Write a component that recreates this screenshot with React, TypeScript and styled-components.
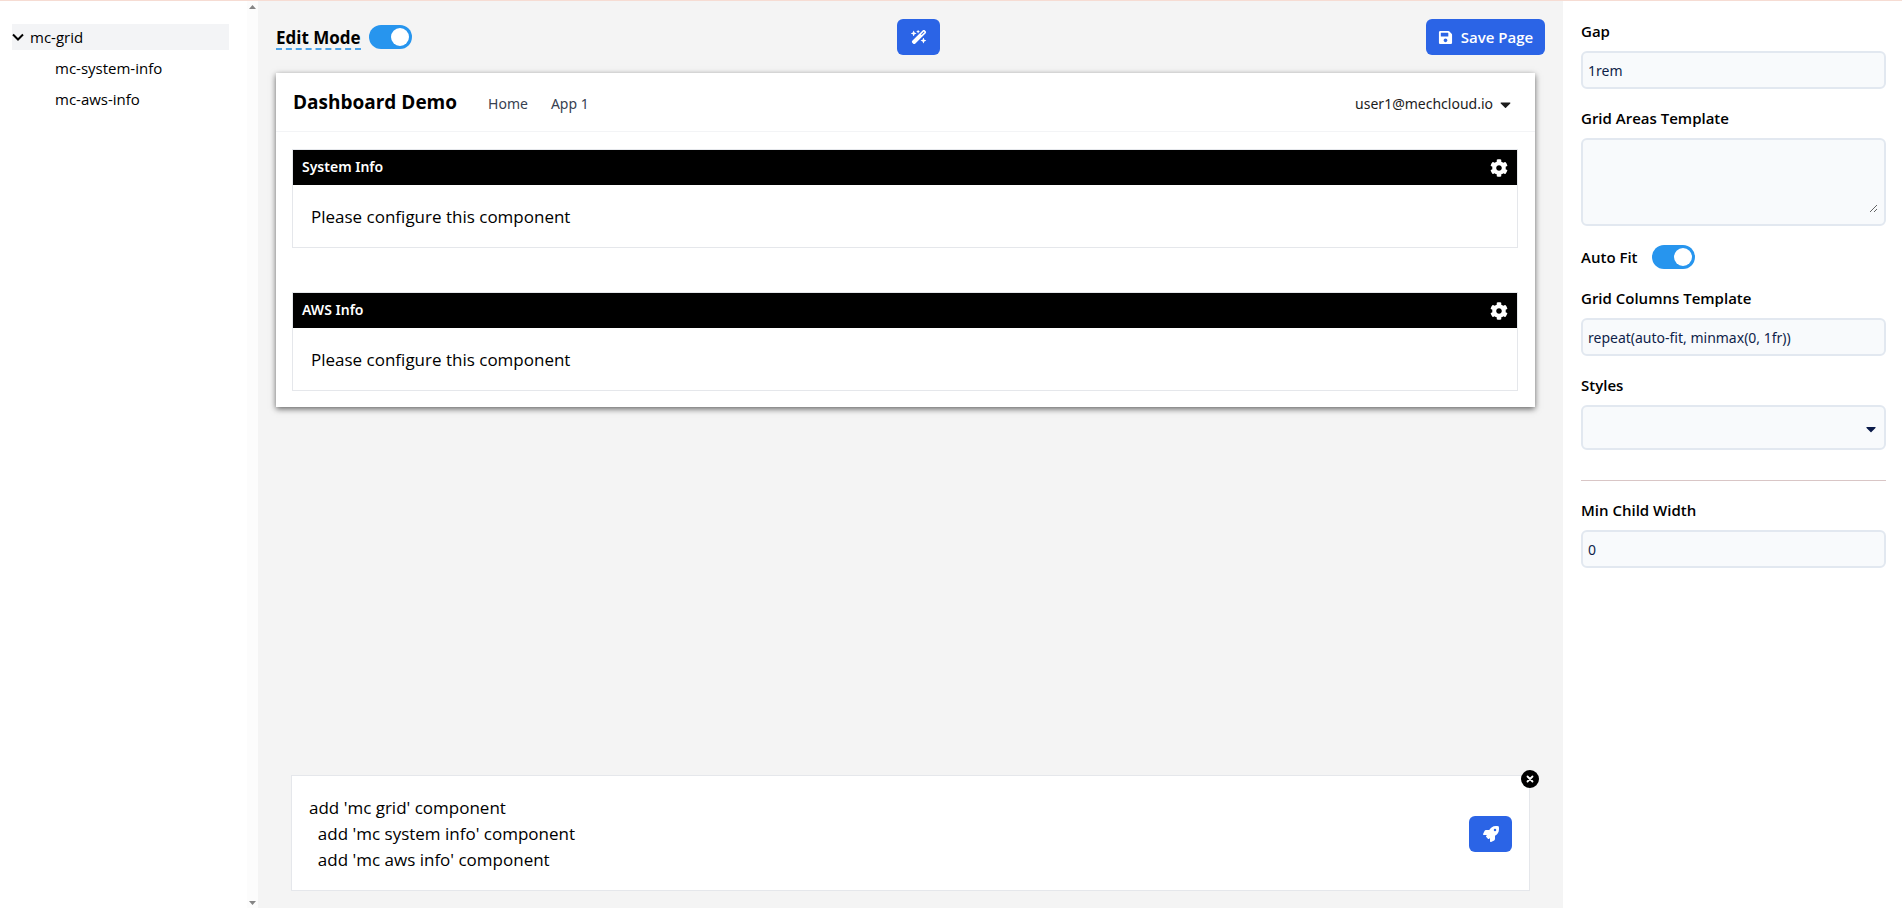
import React, { useState } from "react";
import styled, { createGlobalStyle, css } from "styled-components";
import { FaCaretDown, FaCog, FaRocket, FaSave } from "react-icons/fa";
import { FaWandMagicSparkles } from "react-icons/fa6";

const textFont = `"Open Sans", "Noto Sans", sans-serif`;
const uiFont = `"Noto Sans", "Open Sans", sans-serif`;

const GlobalStyle = createGlobalStyle`
  *, *::before, *::after { box-sizing: border-box; }
  body {
    margin: 0;
    background: #fff;
    color: #000;
    font-family: ${textFont};
    font-size: 17px;
    line-height: 26px;
  }
  button, input, textarea, select { font: inherit; color: inherit; margin: 0; }
  button { cursor: pointer; border: 0; padding: 0; background: none; }
`;

const Shell = styled.div`
  display: grid;
  grid-template-columns: 258px minmax(0, 1fr) 339px;
  min-height: 100vh;
  border-top: 1px solid #f6dcd3;
`;

/* Component tree */

const Sidebar = styled.aside`
  display: flex;
`;

const Tree = styled.ul`
  flex: 1;
  display: flex;
  flex-direction: column;
  gap: 5px;
  margin: 0;
  padding: 23px 18px 0 12px;
  list-style: none;
`;

const TreeRow = styled.button<{ $selected?: boolean; $child?: boolean }>`
  display: flex;
  align-items: center;
  gap: 6px;
  width: 100%;
  height: 26px;
  padding-left: ${(p) => (p.$child ? 43 : 0)}px;
  background: ${(p) => (p.$selected ? "#f3f4f6" : "transparent")};
  font-size: 15px;
  line-height: 22px;
  text-align: left;
`;

const ScrollTrack = styled.div`
  display: flex;
  flex-direction: column;
  justify-content: space-between;
  align-items: center;
  width: 11px;
  padding: 4px 0 3px;
  background: #fcfcfc;
`;

/* Editor */

const Editor = styled.main`
  display: flex;
  flex-direction: column;
  padding: 18px 18px 17px;
  background: #f4f4f4;
`;

const Toolbar = styled.header`
  display: flex;
  justify-content: space-between;
  align-items: center;
  height: 36px;
`;

const ModeLabel = styled.label`
  display: flex;
  align-items: center;
  gap: 8px;
  font-weight: 700;
`;

const ModeText = styled.span`
  padding-top: 3px;
  line-height: 21px;
  border-bottom: 2px dashed #4ba3ea;
`;

const Toggle = styled.input.attrs({ type: "checkbox" })`
  appearance: none;
  display: flex;
  align-items: center;
  width: 43px;
  height: 24px;
  padding: 0 3px;
  border-radius: 12px;
  background: #ccc;
  cursor: pointer;

  &::before {
    content: "";
    width: 18px;
    height: 18px;
    border-radius: 50%;
    background: #fff;
  }
  &:checked {
    justify-content: flex-end;
    background: #2795ee;
  }
`;

const PrimaryButton = styled.button<{ $wide?: boolean }>`
  display: flex;
  align-items: center;
  justify-content: center;
  gap: 8px;
  min-width: ${(p) => (p.$wide ? 119 : 43)}px;
  height: 36px;
  border-radius: 6px;
  background: #2b64e6;
  color: #fff;
  font-family: ${textFont};
  font-size: 15px;
  font-weight: 600;
`;

const Preview = styled.section`
  margin: 18px 10px 0 0;
  background: #fff;
  box-shadow: 0 2px 6px rgba(0, 0, 0, 0.6);
`;

const NavBar = styled.nav`
  display: flex;
  align-items: center;
  height: 59px;
  padding: 0 21px 0 17px;
  border-bottom: 1px solid #f3f4f6;
`;

const Brand = styled.h1`
  margin: 0 31px 0 0;
  font-size: 19px;
  line-height: 26px;
  font-weight: 700;
`;

const NavLink = styled.a`
  margin-right: 23px;
  padding-top: 4px;
  color: #374151;
  font-family: ${uiFont};
  font-size: 14px;
  line-height: 22px;
  text-decoration: none;
`;

const UserMenu = styled.button`
  display: flex;
  align-items: center;
  gap: 4px;
  margin-left: auto;
  padding-top: 4px;
  font-family: ${uiFont};
  font-size: 14px;
  line-height: 22px;
  color: #1c1c1c;
`;

const Widgets = styled.div`
  display: grid;
  gap: 44px;
  padding: 17px 17px 16px 16px;
`;

const Widget = styled.article`
  border: 1px solid #e5e7eb;
`;

const WidgetBar = styled.header`
  display: flex;
  align-items: center;
  justify-content: space-between;
  height: 35px;
  padding: 0 9px;
  background: #000;
  color: #fff;
`;

const WidgetTitle = styled.h2`
  margin: 0;
  padding-bottom: 2px;
  font-family: ${uiFont};
  font-size: 14px;
  line-height: 22px;
  font-weight: 600;
`;

const IconButton = styled.button`
  display: flex;
  color: inherit;
`;

const WidgetBody = styled.p`
  margin: 0;
  padding: 19px 18px 17px;
`;

const Prompt = styled.form`
  position: relative;
  display: flex;
  align-items: center;
  gap: 18px;
  margin: auto 15px 0 15px;
  padding: 19px 17px 17px;
  border: 1px solid #e5e7eb;
  background: #fff;
`;

const PromptText = styled.textarea`
  flex: 1;
  height: 78px;
  padding: 0;
  border: 0;
  outline: 0;
  resize: none;
  background: none;
  overflow: hidden;
`;

const CloseButton = styled.button`
  position: absolute;
  top: -6px;
  right: -10px;
  display: flex;
`;

/* Properties */

const Properties = styled.aside`
  display: flex;
  flex-direction: column;
  gap: 19px;
  padding: 20px 16px 18px 18px;
`;

const Field = styled.div`
  display: flex;
  flex-direction: column;
  gap: 9px;
`;

const SwitchField = styled.div`
  display: flex;
  align-items: center;
  gap: 14px;
`;

const FieldLabel = styled.label`
  font-size: 15px;
  line-height: 21px;
  font-weight: 600;
`;

const control = css`
  width: 100%;
  border: 2px solid #e2e8f0;
  border-radius: 6px;
  background: #f8fafc;
  color: #0f1f4a;
  font-family: ${uiFont};
  font-size: 14px;
  line-height: 22px;
  outline: 0;
`;

const TextInput = styled.input`
  ${control}
  height: 38px;
  padding: 0 5px;
`;

const AreaFrame = styled.div`
  ${control}
  display: flex;
  padding: 9px 6px 11px 5px;
`;

const Area = styled.textarea`
  width: 100%;
  height: 64px;
  padding: 0;
  border: 0;
  outline: 0;
  background: none;
  resize: vertical;
`;

const SelectFrame = styled.div`
  position: relative;
  display: flex;
  color: #0b1b4a;
`;

const Select = styled.select`
  ${control}
  appearance: none;
  height: 45px;
  padding: 0 5px;
`;

const SelectArrow = styled(FaCaretDown)`
  position: absolute;
  right: 7px;
  top: 16px;
  pointer-events: none;
`;

const Divider = styled.hr`
  width: 100%;
  margin: 11px 0 0;
  border: 0;
  border-top: 1px solid #d9c6c6;
`;

const ScrollArrow = ({ down }: { down?: boolean }) => (
  <svg width="7" height="4" viewBox="0 0 7 4" aria-hidden="true">
    <path d={down ? "M0 0h7L3.5 4z" : "M0 4h7L3.5 0z"} fill="#858585" />
  </svg>
);

const Chevron = () => (
  <svg width="12" height="8" viewBox="0 0 12 8" fill="none" aria-hidden="true">
    <path d="M1 1.5 6 6.5 11 1.5" stroke="#000" strokeWidth="2" />
  </svg>
);

const CloseIcon = () => (
  <svg width="18" height="18" viewBox="0 0 18 18" aria-hidden="true">
    <circle cx="9" cy="9" r="9" />
    <path d="M6.5 6.5l5 5m0-5l-5 5" stroke="#fff" strokeWidth="1.8" strokeLinecap="round" />
  </svg>
);

const widgets = ["System Info", "AWS Info"];

const script = `add 'mc grid' component
  add 'mc system info' component
  add 'mc aws info' component`;

export default function App() {
  const [selected, setSelected] = useState("mc-grid");

  return (
    <>
      <GlobalStyle />
      <Shell>
        <Sidebar>
          <Tree>
            {["mc-grid", "mc-system-info", "mc-aws-info"].map((name, i) => (
              <li key={name}>
                <TreeRow
                  type="button"
                  $child={i > 0}
                  $selected={selected === name}
                  onClick={() => setSelected(name)}
                >
                  {i === 0 && <Chevron />}
                  {name}
                </TreeRow>
              </li>
            ))}
          </Tree>
          <ScrollTrack>
            <ScrollArrow />
            <ScrollArrow down />
          </ScrollTrack>
        </Sidebar>

        <Editor>
          <Toolbar>
            <ModeLabel>
              <ModeText>Edit Mode</ModeText>
              <Toggle defaultChecked />
            </ModeLabel>
            <PrimaryButton type="button" aria-label="Generate">
              <FaWandMagicSparkles size={16} />
            </PrimaryButton>
            <PrimaryButton type="button" $wide>
              <FaSave size={15} />
              Save Page
            </PrimaryButton>
          </Toolbar>

          <Preview>
            <NavBar>
              <Brand>Dashboard Demo</Brand>
              <NavLink href="#home">Home</NavLink>
              <NavLink href="#app-1">App 1</NavLink>
              <UserMenu type="button">
                user1@mechcloud.io
                <FaCaretDown size={17} />
              </UserMenu>
            </NavBar>
            <Widgets>
              {widgets.map((title) => (
                <Widget key={title}>
                  <WidgetBar>
                    <WidgetTitle>{title}</WidgetTitle>
                    <IconButton type="button" aria-label={`Configure ${title}`}>
                      <FaCog size={18} />
                    </IconButton>
                  </WidgetBar>
                  <WidgetBody>Please configure this component</WidgetBody>
                </Widget>
              ))}
            </Widgets>
          </Preview>

          <Prompt onSubmit={(e) => e.preventDefault()}>
            <PromptText aria-label="Prompt" defaultValue={script} spellCheck={false} />
            <PrimaryButton type="submit" aria-label="Run">
              <FaRocket size={16} />
            </PrimaryButton>
            <CloseButton type="button" aria-label="Close">
              <CloseIcon />
            </CloseButton>
          </Prompt>
        </Editor>

        <Properties>
          <Field>
            <FieldLabel htmlFor="gap">Gap</FieldLabel>
            <TextInput id="gap" defaultValue="1rem" />
          </Field>
          <Field>
            <FieldLabel htmlFor="areas">Grid Areas Template</FieldLabel>
            <AreaFrame>
              <Area id="areas" />
            </AreaFrame>
          </Field>
          <SwitchField>
            <FieldLabel htmlFor="autofit">Auto Fit</FieldLabel>
            <Toggle id="autofit" defaultChecked />
          </SwitchField>
          <Field>
            <FieldLabel htmlFor="columns">Grid Columns Template</FieldLabel>
            <TextInput id="columns" defaultValue="repeat(auto-fit, minmax(0, 1fr))" />
          </Field>
          <Field>
            <FieldLabel htmlFor="styles">Styles</FieldLabel>
            <SelectFrame>
              <Select id="styles" defaultValue="">
                <option value="" />
              </Select>
              <SelectArrow size={16} />
            </SelectFrame>
          </Field>
          <Divider />
          <Field>
            <FieldLabel htmlFor="min-width">Min Child Width</FieldLabel>
            <TextInput id="min-width" defaultValue="0" />
          </Field>
        </Properties>
      </Shell>
    </>
  );
}
